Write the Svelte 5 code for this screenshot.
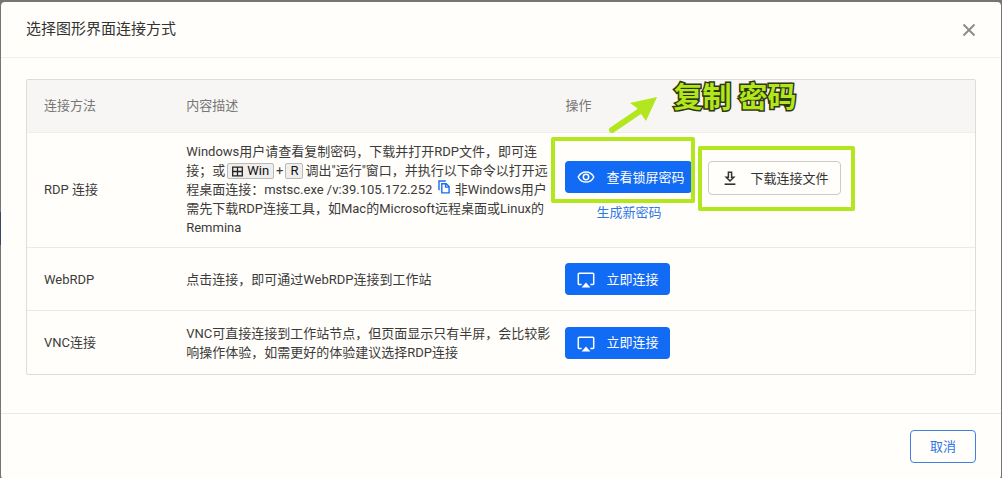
<script>
  const address = '39.105.172.252';
</script>

{#snippet screenIcon()}
  <svg class="icon" viewBox="0 0 18 18" width="18" height="18" aria-hidden="true">
    <path d="M4.6 14.600H2.200a.9.9 0 0 1-.9-.9V4.200a.9.9 0 0 1 .9-.9h13.600a.9.9 0 0 1 .9.9v9.500a.9.9 0 0 1-.9.9h-2.400" fill="none" stroke="currentColor" stroke-width="1.5" />
    <path d="M9 12.600 13.400 17.400H4.600z" fill="currentColor" />
  </svg>
{/snippet}

<div class="backdrop">
  <div class="dialog" role="dialog" aria-labelledby="title">
    <header>
      <h1 id="title">选择图形界面连接方式</h1>
      <button class="close" aria-label="关闭">
        <svg viewBox="0 0 14 14" width="14" height="14" aria-hidden="true">
          <path d="M1.5 1.5 12.5 12.5M12.5 1.5 1.5 12.5" stroke="#8c8b89" stroke-width="1.900" />
        </svg>
      </button>
    </header>

    <main>
      <table>
        <colgroup><col class="c1" /><col class="c2" /><col /></colgroup>
        <thead>
          <tr><th>连接方法</th><th>内容描述</th><th>操作</th></tr>
        </thead>
        <tbody>
          <tr class="tall">
            <td>RDP 连接</td>
            <td class="desc">
              Windows用户请查看复制密码，下载并打开RDP文件，即可连<br />接；或<kbd><svg viewBox="0 0 11 11" width="11" height="11" aria-hidden="true"><path d="M.7 1.200h9.600v8.600H.7zM5.500 1.200v8.600M.7 5.500h9.600" fill="none" stroke="#222" stroke-width="1.300" /></svg>Win</kbd>+<kbd>R</kbd>调出"运行"窗口，并执行以下命令以打开远<br />程桌面连接：mstsc.exe /v:{address}
              <button class="copy" aria-label="复制"><svg viewBox="0 0 12 14" width="12" height="14" aria-hidden="true"><path d="M1 10.200V1h6.800M3.800 3.700h4.400l2.900 2.900v6.300H3.800zM7.600 3.900v3.200h3.300" fill="none" stroke="#1a6cf0" stroke-width="1.400" /></svg></button>
              非Windows用户<br />需先下载RDP连接工具，如Mac的Microsoft远程桌面或Linux的<br />Remmina
            </td>
            <td>
              <div class="actions">
                <div class="stack">
                  <button class="primary reveal">
                    <svg class="icon" viewBox="0 0 18 18" width="18" height="18" aria-hidden="true">
                      <path d="M1.200 9C2.800 5.700 5.600 3.900 9 3.900S15.200 5.700 16.800 9C15.200 12.300 12.400 14.100 9 14.100S2.800 12.300 1.200 9z" fill="none" stroke="currentColor" stroke-width="1.500" />
                      <circle cx="9" cy="9" r="2.700" fill="none" stroke="currentColor" stroke-width="1.500" />
                    </svg>
                    查看锁屏密码
                  </button>
                  <button class="link">生成新密码</button>
                </div>
                <button class="outline">
                  <svg class="icon" viewBox="0 0 18 18" width="18" height="18" aria-hidden="true">
                    <path d="M7.400 3.200h3.200v5h2.200L9 12 5.200 8.200h2.200z" fill="none" stroke="currentColor" stroke-width="1.500" />
                    <path d="M3.600 15.200h10.800" stroke="currentColor" stroke-width="1.600" />
                  </svg>
                  下载连接文件
                </button>
                <div class="frame first"></div>
                <div class="frame second"></div>
                <svg class="arrow" viewBox="0 0 52 40" width="52" height="40" aria-hidden="true">
                  <path d="M6 35 34 16" stroke="#b2e61d" stroke-width="6" stroke-linecap="round" />
                  <path d="M51 2 24 8 31 13 40 26z" fill="#b2e61d" />
                </svg>
                <div class="note">复制 密码</div>
              </div>
            </td>
          </tr>
          <tr>
            <td>WebRDP</td>
            <td class="desc">点击连接，即可通过WebRDP连接到工作站</td>
            <td><button class="primary">{@render screenIcon()}立即连接</button></td>
          </tr>
          <tr>
            <td>VNC连接</td>
            <td class="desc">VNC可直接连接到工作站节点，但页面显示只有半屏，会比较影<br />响操作体验，如需更好的体验建议选择RDP连接</td>
            <td><button class="primary">{@render screenIcon()}立即连接</button></td>
          </tr>
        </tbody>
      </table>
    </main>

    <footer><button class="cancel">取消</button></footer>
  </div>
</div>

<style>
  :global(body) { margin: 0; background: #777472; }
  .backdrop {
    box-sizing: border-box;
    min-height: 100vh;
    padding: 2px 1px 0;
    background: linear-gradient(#3b4664, #3b4664) 0 212px / 1px 33px no-repeat, #777472;
    font-family: Roboto, "Noto Sans CJK SC", sans-serif;
    font-size: 13px;
    line-height: 19px;
    color: #3c3b3a;
  }
  .dialog {
    display: flex;
    flex-direction: column;
    min-height: calc(100vh - 2px);
    background: #fffefb;
    border-radius: 4px;
  }
  header {
    display: flex;
    align-items: center;
    justify-content: space-between;
    height: 55px;
    padding: 0 25px;
    border-bottom: 1px solid #f0efed;
  }
  h1 { margin: 0; font-size: 15px; font-weight: 400; color: #333; }
  button {
    font: inherit;
    white-space: nowrap;
    cursor: pointer;
    border: 0;
    padding: 0;
    background: none;
  }
  .close { display: flex; }
  main { padding: 21px 25px 38px; }
  table {
    width: 100%;
    table-layout: fixed;
    border-collapse: separate;
    border-spacing: 0;
    border: 1px solid #deddda;
    border-radius: 2px;
  }
  .c1 { width: 15%; }
  .c2 { width: 40%; }
  th {
    box-sizing: border-box;
    height: 53px;
    padding: 0 0 2px 17px;
    text-align: left;
    font-weight: 400;
    color: #777674;
    background: #f7f6f4;
    border-bottom: 1px solid #efeeec;
  }
  td {
    box-sizing: border-box;
    height: 63px;
    padding: 0 0 0 17px;
    vertical-align: middle;
    border-bottom: 1px solid #ebeae8;
  }
  .tall td { height: 115px; padding-bottom: 2px; }
  tbody tr:last-child td { border-bottom: 0; }
  .desc { white-space: nowrap; }
  kbd {
    display: inline-flex;
    align-items: center;
    gap: 4px;
    box-sizing: border-box;
    height: 16px;
    margin: 0 2px;
    padding: 0 4px;
    vertical-align: middle;
    font-family: inherit;
    font-size: 13px;
    line-height: 14px;
    font-weight: 400;
    color: #111;
    background: #efeeec;
    border: 1px solid #bbbab8;
    border-radius: 2px;
  }
  .copy { margin: 0 2px; line-height: 14px; }
  .copy svg { display: block; }
  .actions {
    position: relative;
    display: flex;
    gap: 16px;
    align-items: flex-start;
    padding-top: 5px;
  }
  .stack { display: flex; flex-direction: column; align-items: center; gap: 10px; }
  .icon { flex: none; }
  .primary, .outline {
    display: flex;
    align-items: center;
    justify-content: center;
    gap: 11px;
    height: 32px;
    padding: 0 12px;
    border-radius: 4px;
  }
  .primary { background: #126bf5; color: #fff; }
  .reveal { padding-right: 8px; }
  .outline { height: 34px; border: 1px solid #cccbc9; color: #333; }
  .link { color: #2f76e6; }
  .frame { position: absolute; border: 4px solid #b2e61d; border-radius: 2px; box-sizing: border-box; }
  .first { left: -14px; top: -19px; width: 144px; height: 66px; }
  .second { left: 133px; top: -10px; width: 157px; height: 65px; }
  .arrow { position: absolute; left: 41px; top: -61px; }
  .note {
    position: absolute;
    left: 108px;
    top: -78px;
    font-size: 29px;
    line-height: 40px;
    font-weight: 700;
    white-space: nowrap;
    color: #b2e61d;
    -webkit-text-stroke: 3px #30360f;
    paint-order: stroke fill;
  }
  footer {
    flex: 1;
    display: flex;
    justify-content: flex-end;
    align-items: flex-start;
    padding: 16px 25px;
    border-top: 1px solid #ebeae8;
  }
  .cancel {
    box-sizing: border-box;
    height: 33px;
    padding: 0 19px;
    border: 1px solid #3f7fe4;
    border-radius: 4px;
    color: #2f76e6;
  }
</style>
